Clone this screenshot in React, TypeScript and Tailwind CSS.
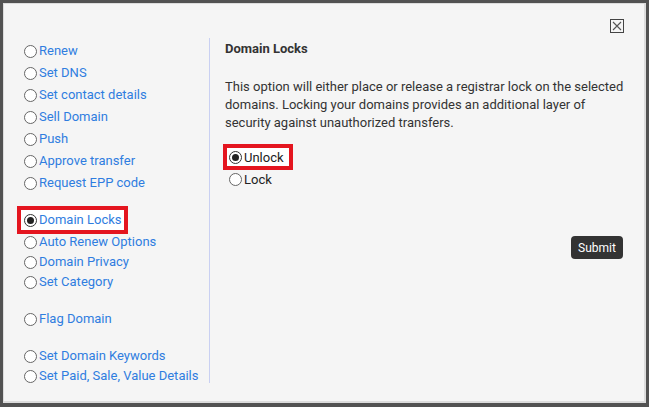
import React, { useState } from 'react'

const actions = [
  { id: 'renew', label: 'Renew', group: 1 },
  { id: 'dns', label: 'Set DNS', group: 1 },
  { id: 'contact', label: 'Set contact details', group: 1 },
  { id: 'sell', label: 'Sell Domain', group: 1 },
  { id: 'push', label: 'Push', group: 1 },
  { id: 'approve', label: 'Approve transfer', group: 1 },
  { id: 'epp', label: 'Request EPP code', group: 1 },
  { id: 'locks', label: 'Domain Locks', group: 2 },
  { id: 'autorenew', label: 'Auto Renew Options', group: 2 },
  { id: 'privacy', label: 'Domain Privacy', group: 2 },
  { id: 'category', label: 'Set Category', group: 2 },
  { id: 'flag', label: 'Flag Domain', group: 3 },
  { id: 'keywords', label: 'Set Domain Keywords', group: 4 },
  { id: 'paid', label: 'Set Paid, Sale, Value Details', group: 4 },
]

const Radio = ({ checked }: { checked: boolean }) => (
  <span
    className={`flex items-center justify-center w-[13px] h-[13px] shrink-0 rounded-full border bg-white ${
      checked ? 'border-[#333]' : 'border-[#666]'
    }`}
  >
    {checked && <span className="w-[7px] h-[7px] rounded-full bg-[#222]" />}
  </span>
)

const ActionRow = ({ label, checked, tall }: { label: string; checked: boolean; tall: boolean }) => {
  const inner = (
    <span className="flex items-center gap-[2px]">
      <Radio checked={checked} />
      <span className="text-[#2f7de0] leading-none pb-[1px]">{label}</span>
    </span>
  )
  if (checked) {
    return (
      <div className="flex items-center h-[22px] pb-[2px]">
        <span className="-ml-[7px] border-[4px] border-[#e4151f] bg-white pl-[3px] pr-[2px] h-[28px] flex items-center">
          {inner}
        </span>
      </div>
    )
  }
  return <div className={`flex items-center ${tall ? 'h-[22px]' : 'h-[20px]'}`}>{inner}</div>
}

const App = () => {
  const [selected] = useState('locks')
  const [lock, setLock] = useState('unlock')

  const groups = [1, 2, 3, 4]

  return (
    <div
      className="w-[649px] h-[407px] bg-[#525252] pt-[3px] pl-[3px] pr-[3px] pb-[4px]"
      style={{ fontFamily: 'Roboto, "Liberation Sans", sans-serif' }}
    >
      <div className="h-full border-t border-l border-[#dcdcdc] border-r-2 border-b-2 bg-[#f5f5f5] text-[13px]">
        <div className="flex justify-end pt-[15px] pr-[20px]">
          <button className="w-[14px] h-[14px] border border-[#444] flex items-center justify-center">
            <svg width="10" height="10" viewBox="0 0 10 10">
              <path d="M1 1L9 9M9 1L1 9" stroke="#555" strokeWidth="1.1" />
            </svg>
          </button>
        </div>
        <div className="flex mt-[7px]">
          <div className="w-[206px] pl-[20px] h-[345px] -mt-[2px] pt-[2px] border-r border-[#c9d0f2]">
            {groups.map((g, gi) => (
              <div key={g} className={gi === 0 ? '' : gi === 1 ? 'mt-[16px]' : 'mt-[17px]'}>
                {actions
                  .filter((a) => a.group === g)
                  .map((a) => (
                    <ActionRow key={a.id} label={a.label} checked={a.id === selected} tall={g === 1} />
                  ))}
              </div>
            ))}
          </div>
          <div className="w-[420px] pl-[15px] text-[#333]">
            <h2 className="font-bold leading-[18px]">Domain Locks</h2>
            <p className="mt-[20px] leading-[18px] pr-[4px]">
              This option will either place or release a registrar lock on the selected domains. Locking your
              domains provides an additional layer of security against unauthorized transfers.
            </p>
            <div className="mt-[12px] flex flex-col items-start">
              <button
                onClick={() => setLock('unlock')}
                className="-ml-[2px] border-[4px] border-[#e4151f] bg-white h-[26px] pl-[2px] pr-[5px] flex items-center gap-[2px]"
              >
                <Radio checked={lock === 'unlock'} />
                <span className="leading-none text-[#222]">Unlock</span>
              </button>
              <button
                onClick={() => setLock('lock')}
                className="h-[20px] -mt-[1px] pl-[4px] flex items-center gap-[2px]"
              >
                <Radio checked={lock === 'lock'} />
                <span className="leading-none text-[#222]">Lock</span>
              </button>
            </div>
            <div className="flex justify-end mt-[47px] pr-[7px]">
              <button className="w-[52px] h-[23px] rounded-[4px] bg-[#333] text-white text-[12px]">Submit</button>
            </div>
          </div>
        </div>
      </div>
    </div>
  )
}

export default App
